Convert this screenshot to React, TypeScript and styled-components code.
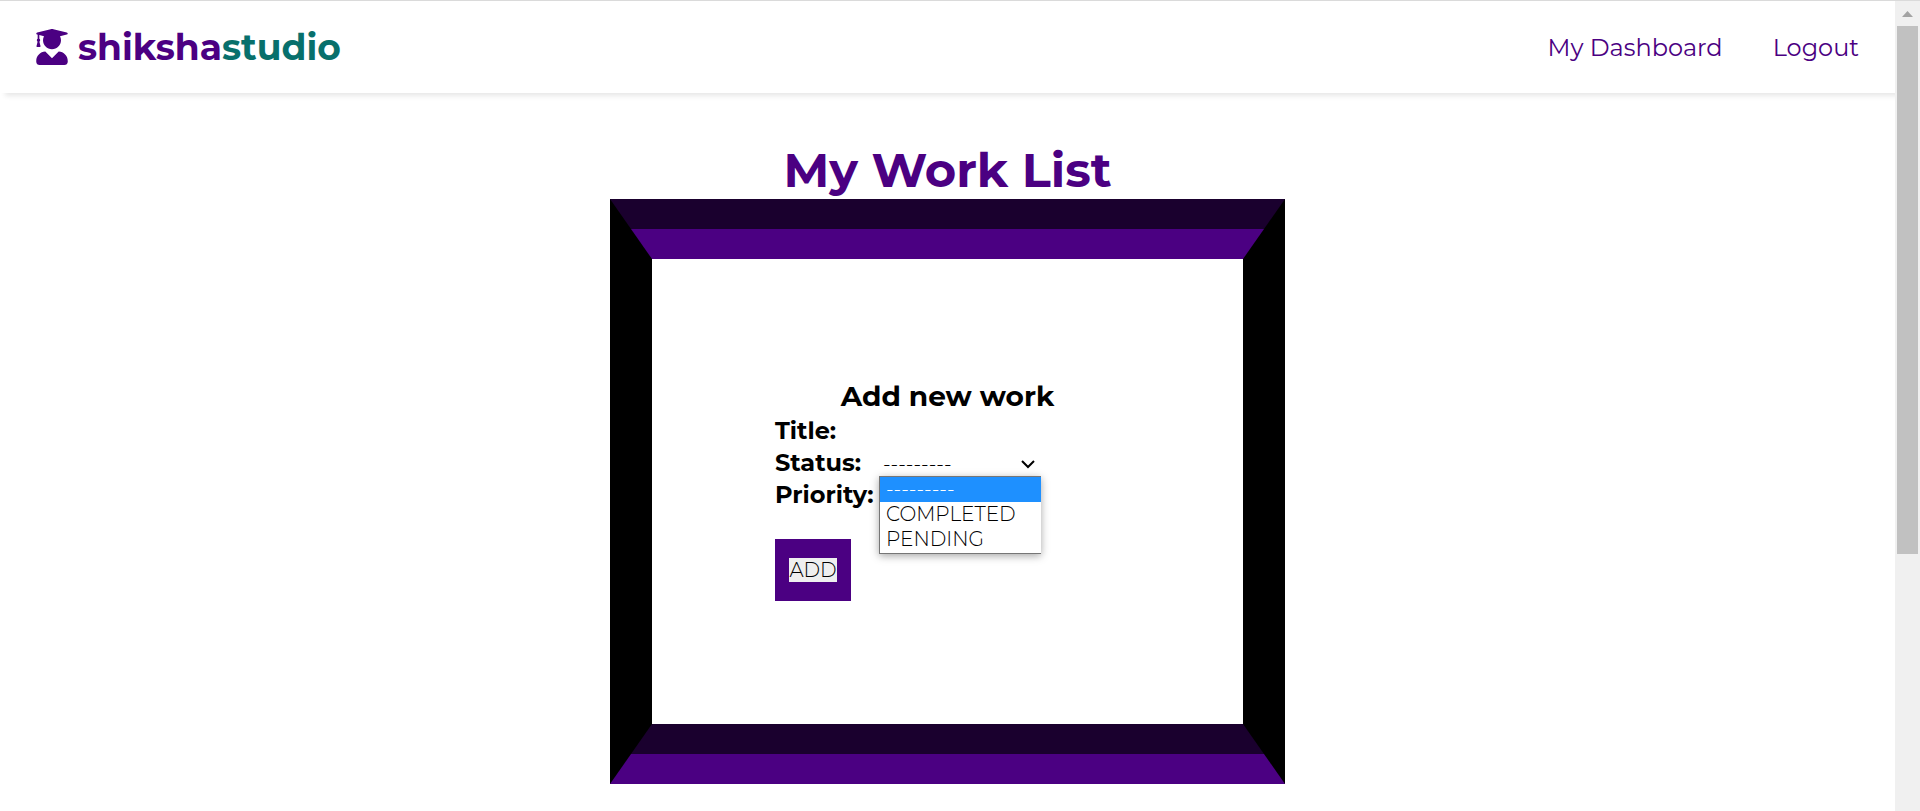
import React from "react";
import styled, { createGlobalStyle } from "styled-components";
import { FaUserGraduate } from "react-icons/fa";

const GlobalStyle = createGlobalStyle`
  *, *::before, *::after { box-sizing: border-box; }
  html, body { margin: 0; padding: 0; }
  body {
    font-family: Montserrat, Inter, "Liberation Sans", sans-serif;
    background: #fff;
    color: #000;
    overflow: hidden;
  }
  h1, h2, ul { margin: 0; padding: 0; }
`;

const Window = styled.div`
  display: flex;
  min-height: 100vh;
  border-top: 1px solid #dadada;
`;

const Page = styled.div`
  flex: 1;
  min-width: 0;
  overflow: hidden;
`;

const Header = styled.header`
  display: flex;
  align-items: center;
  justify-content: space-between;
  height: 92px;
  padding: 0 36px;
  box-shadow: 5px 3px 5px 0 #e8e8e8;
`;

const Brand = styled.a`
  display: flex;
  align-items: center;
  gap: 10px;
  font-size: 36px;
  line-height: 48px;
  font-weight: 700;
  color: #4b0082;
  text-decoration: none;

  svg { width: 32px; height: 36px; }
`;

const BrandAccent = styled.span`
  color: #08706c;
`;

const Nav = styled.nav`
  display: flex;
  gap: 50px;
  padding-top: 2px;
`;

const NavLink = styled.a`
  font-size: 24px;
  line-height: 32px;
  font-weight: 400;
  color: #4b0082;
  text-decoration: none;
`;

const Main = styled.main`
  display: flex;
  flex-direction: column;
  align-items: center;
  padding-top: 48px;
`;

const Title = styled.h1`
  font-size: 48px;
  line-height: 58px;
  font-weight: 700;
  color: #4b0082;
`;

const Frame = styled.section`
  width: 675px;
  max-width: 100%;
  border-style: solid;
  border-width: 30px 21px;
  border-color: #1a002e #000 #4b0082;
`;

const FrameInner = styled.div`
  display: flex;
  justify-content: center;
  padding: 120px 0 123px;
  border-style: solid;
  border-width: 30px 21px;
  border-color: #4b0082 #000 #1a002e;
`;

const Form = styled.form`
  width: 345px;
`;

const FormTitle = styled.h2`
  padding-bottom: 2px;
  font-size: 28px;
  line-height: 34px;
  font-weight: 700;
  text-align: center;
`;

const Field = styled.div`
  position: relative;
  display: grid;
  grid-template-columns: 104px 164px;
  align-items: center;
  height: 32px;
`;

const Label = styled.label`
  font-size: 24px;
  line-height: 32px;
  font-weight: 700;
  white-space: nowrap;
`;

const TextInput = styled.input`
  width: 100%;
  height: 26px;
  padding: 0 4px;
  border: 0;
  outline: 0;
  background: transparent;
  font: inherit;
  font-size: 20px;
  font-weight: 300;
`;

const SelectBox = styled.div`
  display: grid;
  align-items: center;
  padding-top: 2px;

  & > * { grid-area: 1 / 1; }

  svg {
    justify-self: end;
    margin-right: 8px;
    pointer-events: none;
  }
`;

const Select = styled.select`
  appearance: none;
  width: 100%;
  height: 26px;
  padding: 0 4px;
  border: 0;
  outline: 0;
  background: transparent;
  color: #000;
  font: inherit;
  font-size: 20px;
  font-weight: 300;
`;

const Menu = styled.ul`
  position: absolute;
  z-index: 1;
  top: 29px;
  left: 104px;
  width: 162px;
  padding-bottom: 1px;
  border: 1px solid #767676;
  border-right: 0;
  background: #fff;
  box-shadow: 0 2px 8px rgba(0, 0, 0, 0.35);
  list-style: none;
`;

const MenuItem = styled.li<{ $active?: boolean }>`
  padding: 0 6px;
  font-size: 20px;
  line-height: 25px;
  font-weight: 300;
  color: ${(p) => (p.$active ? "#fff" : "#000")};
  background: ${(p) => (p.$active ? "#1e90ff" : "transparent")};
`;

const Actions = styled.div`
  display: inline-flex;
  margin-top: 28px;
  padding: 19px 14px;
  background: #4b0082;
`;

const AddButton = styled.button`
  min-width: 48px;
  padding: 0;
  border: 0;
  background: #efefef;
  color: #000;
  font: inherit;
  font-size: 20px;
  line-height: 24px;
  font-weight: 300;
`;

const ScrollTrack = styled.div`
  display: flex;
  flex-direction: column;
  align-items: center;
  width: 25px;
  background: #f0f0f0;

  svg { display: block; flex: none; }
`;

const ScrollThumb = styled.div`
  width: 21px;
  height: 65.2%;
  background: #c1c1c1;
`;

const EMPTY = "---------";

function Chevron() {
  return (
    <svg width="14" height="10" viewBox="0 0 14 10" fill="none" aria-hidden="true">
      <path d="M1 2l6 6 6-6" stroke="#000" strokeWidth="2" />
    </svg>
  );
}

function SelectField({ id, options }: { id: string; options: string[] }) {
  return (
    <SelectBox>
      <Select id={id} defaultValue={EMPTY}>
        {[EMPTY, ...options].map((o) => (
          <option key={o}>{o}</option>
        ))}
      </Select>
      <Chevron />
    </SelectBox>
  );
}

export default function App() {
  const statuses = ["COMPLETED", "PENDING"];
  return (
    <>
      <GlobalStyle />
      <Window>
        <Page>
          <Header>
            <Brand href="#">
              <FaUserGraduate aria-hidden="true" />
              <span>
                shiksha<BrandAccent>studio</BrandAccent>
              </span>
            </Brand>
            <Nav>
              <NavLink href="#">My Dashboard</NavLink>
              <NavLink href="#">Logout</NavLink>
            </Nav>
          </Header>
          <Main>
            <Title>My Work List</Title>
            <Frame>
              <FrameInner>
                <Form onSubmit={(e) => e.preventDefault()}>
                  <FormTitle>Add new work</FormTitle>
                  <Field>
                    <Label htmlFor="title">Title:</Label>
                    <TextInput id="title" type="text" />
                  </Field>
                  <Field>
                    <Label htmlFor="status">Status:</Label>
                    <SelectField id="status" options={statuses} />
                    <Menu role="listbox" aria-label="Status">
                      {[EMPTY, ...statuses].map((o) => (
                        <MenuItem key={o} role="option" aria-selected={o === EMPTY} $active={o === EMPTY}>
                          {o}
                        </MenuItem>
                      ))}
                    </Menu>
                  </Field>
                  <Field>
                    <Label htmlFor="priority">Priority:</Label>
                    <SelectField id="priority" options={[]} />
                  </Field>
                  <Actions>
                    <AddButton type="submit">ADD</AddButton>
                  </Actions>
                </Form>
              </FrameInner>
            </Frame>
          </Main>
        </Page>
        <ScrollTrack aria-hidden="true">
          <svg width="25" height="25" viewBox="0 0 25 25">
            <path d="M7 16l5.500-6 5.500 6z" fill="#a3a3a3" />
          </svg>
          <ScrollThumb />
        </ScrollTrack>
      </Window>
    </>
  );
}
